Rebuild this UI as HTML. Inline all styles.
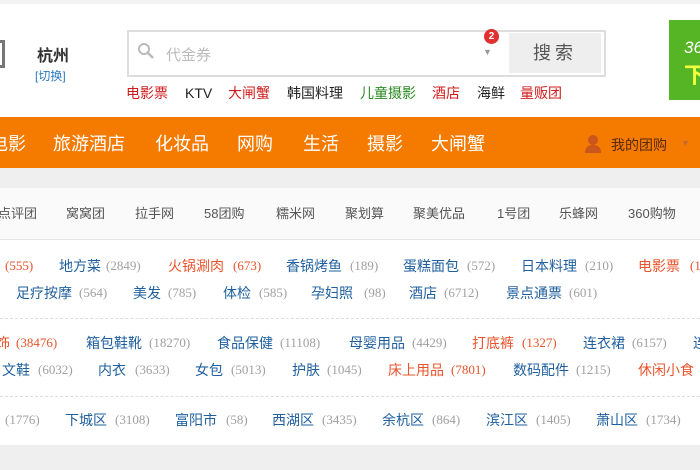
<!DOCTYPE html>
<html><head><meta charset="utf-8"><style>
body{margin:0;width:700px;height:470px;overflow:hidden;background:#fff;position:relative;font-family:"Liberation Sans","Noto Sans CJK SC",sans-serif}
.a{position:absolute;white-space:nowrap}
.n{font-size:14px;color:#1f5f9e;line-height:16px}
.o{color:#e8542c}
.c{font-size:13px;color:#a0a0a0;line-height:16px;font-family:"Liberation Serif","Noto Sans CJK SC",serif}
.co{color:#e8542c}
.p{font-size:13px;color:#555;line-height:16px}
.h{font-size:14px;line-height:16px}
.nav{font-size:18px;color:#fff;line-height:20px}
</style></head><body>
<div class="a" style="left:0;top:0;width:700px;height:4px;background:#f3f3f3"></div>
<div class="a" style="left:-4px;top:40px;width:6px;height:22px;border:3px solid #777;border-left:none"></div>
<div class="a" style="left:37px;top:42px;font-size:16px;font-weight:bold;color:#333">杭州</div>
<div class="a" style="left:35px;top:67px;font-size:12px;color:#2a7ac0">[切换]</div>
<div class="a" style="left:127px;top:30px;width:475px;height:43px;border:2px solid #ddd;background:#fff"></div>
<svg class="a" style="left:137px;top:42px" width="18" height="18"><circle cx="7" cy="7" r="5" fill="none" stroke="#bbb" stroke-width="2"/><line x1="11" y1="11" x2="16" y2="16" stroke="#bbb" stroke-width="2.5"/></svg>
<div class="a" style="left:166px;top:44px;font-size:15px;color:#bbb">代金券</div>
<div class="a" style="left:483px;top:47px;font-size:9px;color:#999">▼</div>
<div class="a" style="left:484px;top:29px;width:15px;height:15px;border-radius:50%;background:#e03030;color:#fff;font-size:10px;font-weight:bold;text-align:center;line-height:15px">2</div>
<div class="a" style="left:509px;top:33px;width:92px;height:40px;background:#eee;color:#555;font-size:18px;text-align:center;line-height:40px;letter-spacing:4px">搜索</div>
<div class="a" style="left:669px;top:20px;width:31px;height:80px;background:#55b524"></div>
<div class="a" style="left:684px;top:38px;font-size:17px;color:#fff;font-style:italic">36</div>
<div class="a" style="left:684px;top:58px;font-size:22px;color:#f0ff40;font-weight:bold">下</div>
<div class="a h" style="left:126px;top:85px;color:#d01c1c">电影票</div>
<div class="a h" style="left:185px;top:85px;color:#222">KTV</div>
<div class="a h" style="left:228px;top:85px;color:#d01c1c">大闸蟹</div>
<div class="a h" style="left:287px;top:85px;color:#222">韩国料理</div>
<div class="a h" style="left:360px;top:85px;color:#2a8a20">儿童摄影</div>
<div class="a h" style="left:432px;top:85px;color:#d01c1c">酒店</div>
<div class="a h" style="left:477px;top:85px;color:#222">海鲜</div>
<div class="a h" style="left:520px;top:85px;color:#d01c1c">量贩团</div>
<div class="a" style="left:0;top:117px;width:700px;height:51px;background:#f47a00"></div>
<div class="a nav" style="left:-10px;top:134px">电影</div>
<div class="a nav" style="left:53px;top:134px">旅游酒店</div>
<div class="a nav" style="left:155px;top:134px">化妆品</div>
<div class="a nav" style="left:237px;top:134px">网购</div>
<div class="a nav" style="left:303px;top:134px">生活</div>
<div class="a nav" style="left:367px;top:134px">摄影</div>
<div class="a nav" style="left:431px;top:134px">大闸蟹</div>
<svg class="a" style="left:584px;top:134px" width="18" height="20"><circle cx="9" cy="6" r="5" fill="#c9561a"/><path d="M1 19 Q1 11 9 11 Q17 11 17 19Z" fill="#c9561a"/></svg>
<div class="a" style="left:611px;top:135px;font-size:14px;color:#5a2a08">我的团购</div>
<div class="a" style="left:681px;top:138px;font-size:9px;color:#c56a30">▼</div>
<div class="a" style="left:0;top:168px;width:700px;height:20px;background:#efefef"></div>
<div class="a" style="left:0;top:188px;width:700px;height:51px;background:#fafafa;border-bottom:1px solid #e6e6e6"></div>
<div class="a p" style="left:-2px;top:206px">点评团</div>
<div class="a p" style="left:66px;top:206px">窝窝团</div>
<div class="a p" style="left:135px;top:206px">拉手网</div>
<div class="a p" style="left:204px;top:206px">58团购</div>
<div class="a p" style="left:276px;top:206px">糯米网</div>
<div class="a p" style="left:345px;top:206px">聚划算</div>
<div class="a p" style="left:413px;top:206px">聚美优品</div>
<div class="a p" style="left:497px;top:206px">1号团</div>
<div class="a p" style="left:559px;top:206px">乐蜂网</div>
<div class="a p" style="left:628px;top:206px">360购物</div>

<div class="a c co" style="left:5px;top:258px">(555)</div>
<div class="a n" style="left:59px;top:258px">地方菜</div><div class="a c" style="left:106px;top:258px">(2849)</div>
<div class="a n o" style="left:168px;top:258px">火锅涮肉</div><div class="a c co" style="left:233px;top:258px">(673)</div>
<div class="a n" style="left:286px;top:258px">香锅烤鱼</div><div class="a c" style="left:350px;top:258px">(189)</div>
<div class="a n" style="left:403px;top:258px">蛋糕面包</div><div class="a c" style="left:467px;top:258px">(572)</div>
<div class="a n" style="left:521px;top:258px">日本料理</div><div class="a c" style="left:585px;top:258px">(210)</div>
<div class="a n o" style="left:638px;top:258px">电影票</div><div class="a c co" style="left:690px;top:258px">(1</div>

<div class="a n" style="left:16px;top:285px">足疗按摩</div><div class="a c" style="left:79px;top:285px">(564)</div>
<div class="a n" style="left:133px;top:285px">美发</div><div class="a c" style="left:168px;top:285px">(785)</div>
<div class="a n" style="left:223px;top:285px">体检</div><div class="a c" style="left:259px;top:285px">(585)</div>
<div class="a n" style="left:311px;top:285px">孕妇照</div><div class="a c" style="left:364px;top:285px">(98)</div>
<div class="a n" style="left:409px;top:285px">酒店</div><div class="a c" style="left:444px;top:285px">(6712)</div>
<div class="a n" style="left:506px;top:285px">景点通票</div><div class="a c" style="left:569px;top:285px">(601)</div>
<div class="a" style="left:0;top:318px;width:700px;border-top:1px dashed #ddd"></div>

<div class="a n o" style="left:-4px;top:335px">饰</div><div class="a c co" style="left:16px;top:335px">(38476)</div>
<div class="a n" style="left:86px;top:335px">箱包鞋靴</div><div class="a c" style="left:149px;top:335px">(18270)</div>
<div class="a n" style="left:217px;top:335px">食品保健</div><div class="a c" style="left:280px;top:335px">(11108)</div>
<div class="a n" style="left:349px;top:335px">母婴用品</div><div class="a c" style="left:412px;top:335px">(4429)</div>
<div class="a n o" style="left:472px;top:335px">打底裤</div><div class="a c co" style="left:522px;top:335px">(1327)</div>
<div class="a n" style="left:583px;top:335px">连衣裙</div><div class="a c" style="left:632px;top:335px">(6157)</div>
<div class="a n" style="left:693px;top:335px">连</div>

<div class="a n" style="left:2px;top:362px">文鞋</div><div class="a c" style="left:38px;top:362px">(6032)</div>
<div class="a n" style="left:98px;top:362px">内衣</div><div class="a c" style="left:135px;top:362px">(3633)</div>
<div class="a n" style="left:195px;top:362px">女包</div><div class="a c" style="left:231px;top:362px">(5013)</div>
<div class="a n" style="left:292px;top:362px">护肤</div><div class="a c" style="left:327px;top:362px">(1045)</div>
<div class="a n o" style="left:388px;top:362px">床上用品</div><div class="a c co" style="left:451px;top:362px">(7801)</div>
<div class="a n" style="left:513px;top:362px">数码配件</div><div class="a c" style="left:576px;top:362px">(1215)</div>
<div class="a n o" style="left:638px;top:362px">休闲小食</div>
<div class="a" style="left:0;top:396px;width:700px;border-top:1px dashed #ddd"></div>

<div class="a c" style="left:5px;top:412px">(1776)</div>
<div class="a n" style="left:65px;top:412px">下城区</div><div class="a c" style="left:115px;top:412px">(3108)</div>
<div class="a n" style="left:175px;top:412px">富阳市</div><div class="a c" style="left:226px;top:412px">(58)</div>
<div class="a n" style="left:272px;top:412px">西湖区</div><div class="a c" style="left:322px;top:412px">(3435)</div>
<div class="a n" style="left:382px;top:412px">余杭区</div><div class="a c" style="left:432px;top:412px">(864)</div>
<div class="a n" style="left:486px;top:412px">滨江区</div><div class="a c" style="left:536px;top:412px">(1405)</div>
<div class="a n" style="left:596px;top:412px">萧山区</div><div class="a c" style="left:646px;top:412px">(1734)</div>
<div class="a" style="left:0;top:445px;width:700px;height:25px;background:#efefef"></div>
</body></html>
